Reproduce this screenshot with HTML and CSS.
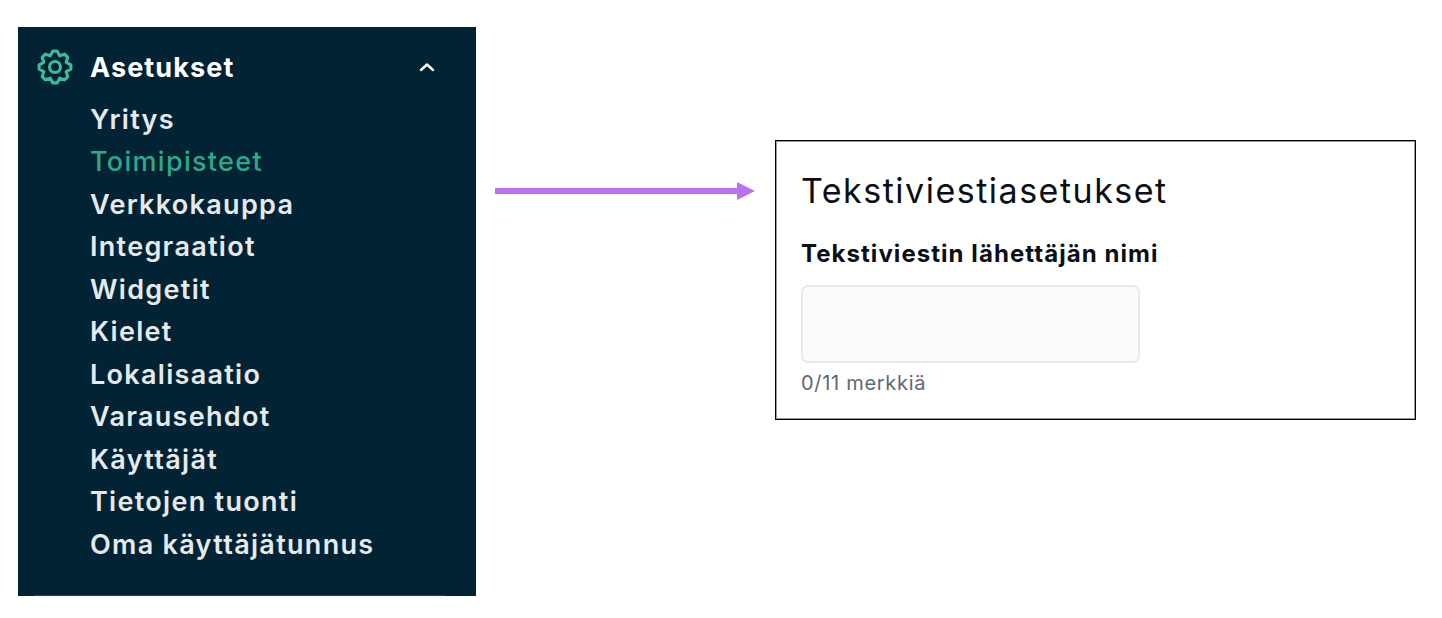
FILE: index.html
```html
<!DOCTYPE html>
<html lang="fi">
<head>
<meta charset="utf-8">
<title>Tekstiviestiasetukset</title>
<link rel="stylesheet" href="styles.css">
</head>
<body>
<main class="page">
  <nav class="sidebar">
    <div class="section-head">
      <svg class="gear" viewBox="-0.5 -0.5 37 37" width="36" height="36" fill="none" stroke="#3dbb9b" stroke-width="3.2" stroke-linejoin="round">
        <path d="M15.7 1.7L20.3 1.7L22.8 6.5L27.9 4.8L31.2 8.1L29.5 13.2L34.3 15.7L34.3 20.3L29.5 22.8L31.2 27.9L27.9 31.2L22.8 29.5L20.3 34.3L15.7 34.3L13.2 29.5L8.1 31.2L4.8 27.9L6.5 22.8L1.7 20.3L1.7 15.7L6.5 13.2L4.8 8.1L8.1 4.8L13.2 6.5Z"/>
        <circle cx="18" cy="18" r="5.6"/>
      </svg>
      <span class="section-title">Asetukset</span>
      <svg class="chevron" viewBox="0 0 16 10" width="16" height="10" fill="none" stroke="#fff" stroke-width="2.4" stroke-linecap="round" stroke-linejoin="round">
        <path d="M2 8L8 2.5L14 8"/>
      </svg>
    </div>
    <ul class="menu">
      <li>Yritys</li>
      <li class="active">Toimipisteet</li>
      <li>Verkkokauppa</li>
      <li>Integraatiot</li>
      <li>Widgetit</li>
      <li>Kielet</li>
      <li>Lokalisaatio</li>
      <li>Varausehdot</li>
      <li>Käyttäjät</li>
      <li>Tietojen tuonti</li>
      <li>Oma käyttäjätunnus</li>
    </ul>
    <div class="sidebar-rule"></div>
  </nav>
  <div class="arrow">
    <span class="arrow-line"></span>
    <span class="arrow-head"></span>
  </div>
  <section class="panel">
    <h1 class="panel-title">Tekstiviestiasetukset</h1>
    <label class="field-label" for="sender">Tekstiviestin lähettäjän nimi</label>
    <input class="field-input" id="sender" type="text">
    <p class="field-hint">0/11 merkkiä</p>
  </section>
</main>
</body>
</html>
```
FILE: styles.css
```css
* { box-sizing: border-box; }
html, body { margin: 0; padding: 0; background: #fff; }
body { font-family: Inter, "Open Sans", "Liberation Sans", sans-serif; }
.page {
  display: flex;
  align-items: flex-start;
  width: 1442px;
  height: 618px;
  padding: 27px 0 0 18px;
  overflow: hidden;
}
.sidebar {
  display: flex;
  flex-direction: column;
  flex: none;
  width: 458px;
  height: 569px;
  padding-top: 21px;
  background: #012334;
}
.section-head {
  display: flex;
  align-items: center;
  height: 38px;
  padding-left: 19px;
}
.gear { flex: none; }
.section-title {
  margin-left: 17px;
  font-size: 27px;
  font-weight: 700;
  letter-spacing: 1.1px;
  color: #fff;
}
.chevron { margin-left: auto; margin-right: 41px; }
.menu {
  display: flex;
  flex-direction: column;
  margin: 0;
  padding: 12.5px 0 0 72px;
  list-style: none;
  font-size: 27px;
  font-weight: 600;
  letter-spacing: 1.3px;
  line-height: 42.5px;
  color: #e6eaed;
}
.menu .active { font-weight: 500; color: #2fa78b; }
.sidebar-rule {
  height: 1px;
  margin: auto 31px 0 16px;
  background: #2b4552;
}
.arrow {
  display: flex;
  align-items: center;
  flex: none;
  margin: 155px 0 0 19px;
}
.arrow-line { width: 242px; height: 6px; background: #bb72ee; }
.arrow-head {
  width: 0;
  height: 0;
  border-left: 18px solid #bb72ee;
  border-top: 9px solid transparent;
  border-bottom: 9px solid transparent;
}
.panel {
  flex: none;
  display: flex;
  flex-direction: column;
  align-items: flex-start;
  width: 641px;
  height: 280px;
  margin: 113px 0 0 20px;
  padding: 27px 0 0 25px;
  border: 1px solid #000;
  box-shadow: inset 0 0 0 1px #9a9a9a;
}
.panel-title {
  margin: 0;
  font-size: 34px;
  font-weight: 400;
  letter-spacing: 1.5px;
  line-height: 46px;
  color: #0b0f14;
}
.field-label {
  margin-top: 25px;
  font-size: 24px;
  font-weight: 700;
  letter-spacing: 1.05px;
  line-height: 30px;
  color: #0b0f14;
}
.field-input {
  width: 339px;
  height: 78px;
  margin-top: 16px;
  background: #fbfbfb;
  border: 2px solid #e9e9e9;
  border-radius: 7px;
}
.field-hint {
  margin: 7px 0 0;
  font-size: 20px;
  letter-spacing: 0.7px;
  line-height: 26px;
  color: #5f6773;
}
```
